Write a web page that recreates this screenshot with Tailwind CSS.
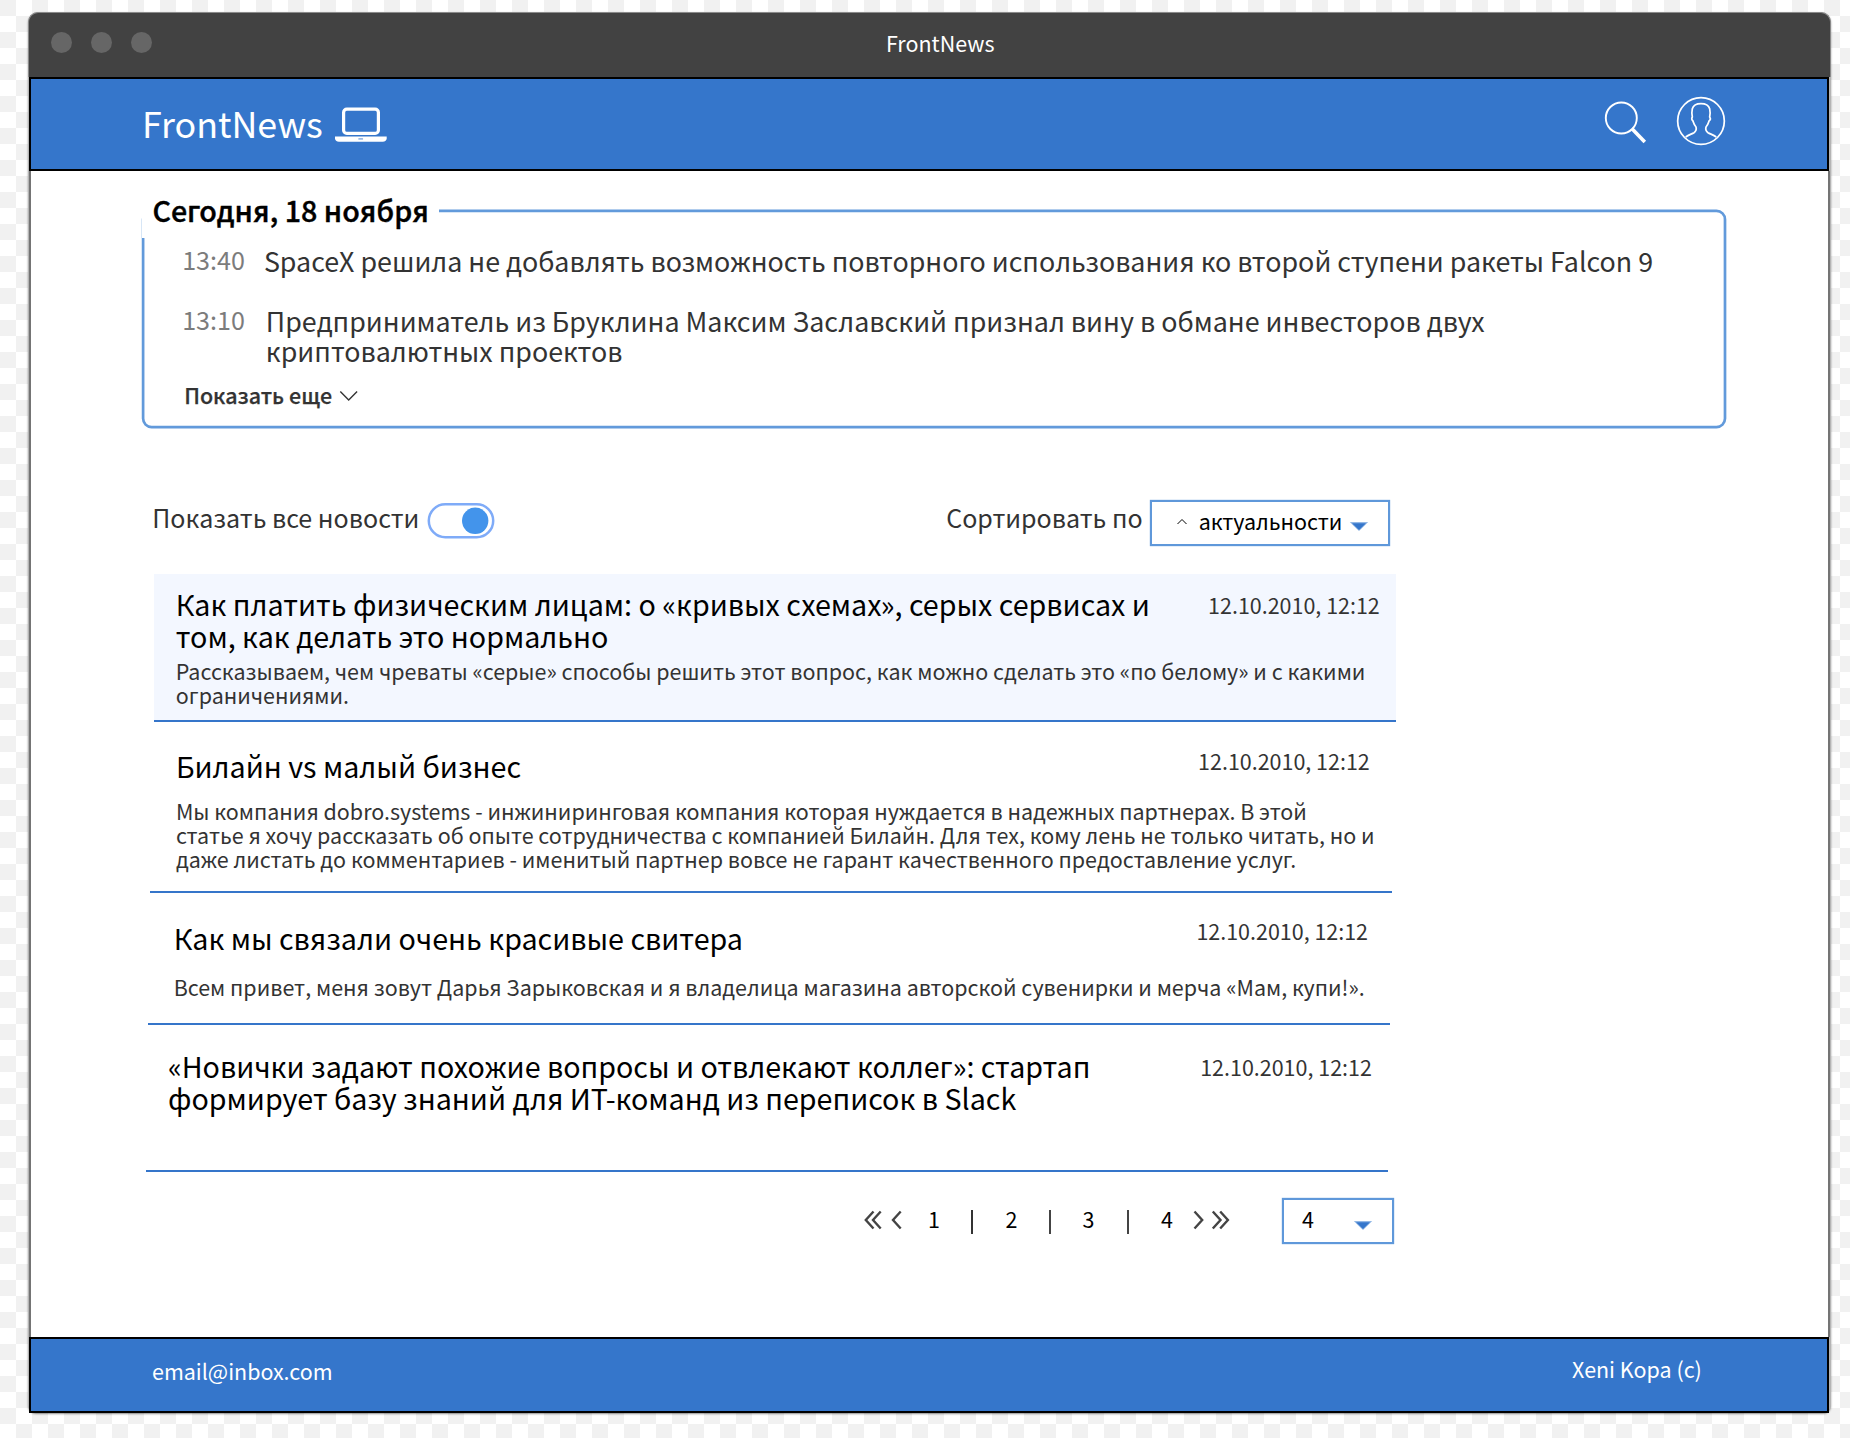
<!DOCTYPE html>
<html lang="ru">
<head>
<meta charset="utf-8">
<title>FrontNews</title>
<script src="https://cdn.jsdelivr.net/npm/@tailwindcss/browser@4"></script>
</head>
<body class="h-[1438px] overflow-hidden bg-white bg-[conic-gradient(#fff_25%,#f1f1f1_0_50%,#fff_0_75%,#f1f1f1_0)] bg-[length:32px_32px] pt-[12px] font-['Noto_Sans_CJK_SC',sans-serif] text-[21.47px] leading-[24px] text-[#333]">
<div class="ml-[28px] flex h-[1401px] w-[1803px] flex-col rounded-t-[10px] rounded-b-[8px] bg-[#b4b4b4] shadow-[0_1px_2px_rgba(0,0,0,0.45)]">

  <!-- Title bar -->
  <div class="flex h-[65px] items-start rounded-t-[10px] border-x border-t border-[#8a8a8a] bg-[#424242] pl-[21.6px]">
    <div class="mt-[18.500px] flex w-[835.400px] gap-[19px]">
      <span class="size-[21px] rounded-full bg-[#666]"></span>
      <span class="size-[21px] rounded-full bg-[#666]"></span>
      <span class="size-[21px] rounded-full bg-[#666]"></span>
    </div>
    <div class="mt-[18px] text-white">FrontNews</div>
  </div>

  <!-- Header -->
  <header class="ml-px flex h-[94px] w-[1800px] items-start border-2 border-black bg-[#3576cb] pl-[111px] text-white">
    <h1 class="mt-[23px] w-[193px] text-[35.8px] leading-[40px]">FrontNews</h1>
    <svg class="mt-[28px] h-[36px] w-[52px]" viewBox="0 0 52 36" fill="none">
      <rect x="8.6" y="2.2" width="34.8" height="24.2" rx="3.2" stroke="#fff" stroke-width="3.2"/>
      <path d="M0 29.6h51.7v1.6c0 2-1.6 3.6-4 3.6H4c-2.400 0-4-1.600-4-3.600z" fill="#fff"/>
      <rect x="23.300" y="31" width="4.800" height="1.800" rx=".6" fill="#9bbbe6"/>
    </svg>
    <svg class="mt-[22px] ml-[1216px] h-[44px] w-[44px]" viewBox="0 0 44 44" fill="none" stroke="#fff">
      <circle cx="18.300" cy="17" r="15.500" stroke-width="1.900"/>
      <path d="M28.800 27.500L41.800 41" stroke-width="3.600"/>
    </svg>
    <svg class="mt-[17px] ml-[29px] h-[50px] w-[50px]" viewBox="0 0 150 150" fill="none" stroke="#fff" stroke-width="5.200" stroke-linejoin="round">
      <circle cx="75" cy="75" r="70"/>
      <path d="M29 123C38 117 47 114 54 110C60 106 62 101 60 93C54 87 53 81 51 75C47 72 46 67 49 63C47 54 47 47 49 38C52 28 62 23 75 23C88 23 98 28 101 38C103 47 103 54 101 63C104 67 103 72 99 75C97 81 96 87 90 93C88 101 90 106 96 110C103 114 112 117 121 123"/>
    </svg>
  </header>

  <main class="ml-px h-[1166px] w-[1801px] border-x-2 border-[#747474] bg-white">

    <!-- Today -->
    <section class="relative ml-[110px] h-[258px] w-[1588px] pt-[23px]">
      <svg class="absolute top-[38px] left-0 h-[222px] w-[1588px]" viewBox="0 0 1588 222" fill="none">
        <rect x="2.100" y="1.900" width="1581.900" height="216.200" rx="8.500" stroke="#629adb" stroke-width="2.700"/>
      </svg>
      <div class="relative">
        <h2 class="ml-px h-[44px] w-[297px] bg-white pl-[10.400px] text-[28.65px] leading-[32px] font-medium text-black [-webkit-text-stroke:0.4px_#000]">Сегодня, 18 ноября</h2>
        <div class="mt-[7px] flex h-[60px] pl-[41.2px]">
          <time class="w-[81.7px] text-[25.1px] leading-[28px] text-[#7c7c7c]">13:40</time>
          <p class="mt-px text-[26.84px] leading-[30px] whitespace-nowrap">SpaceX решила не добавлять возможность повторного использования ко второй ступени ракеты Falcon 9</p>
        </div>
        <div class="flex h-[78px] pl-[41.2px]">
          <time class="w-[83.6px] text-[25.1px] leading-[28px] text-[#7c7c7c]">13:10</time>
          <p class="mt-px text-[26.85px] leading-[30px] whitespace-nowrap">Предприниматель из Бруклина Максим Заславский признал вину в обмане инвесторов двух<br>криптовалютных проектов</p>
        </div>
        <button class="ml-[43.2px] flex items-start font-medium">
          <span class="w-[154.500px] text-left [-webkit-text-stroke:0.25px_#333]">Показать еще</span>
          <svg class="mt-[7px] h-[12px] w-[20px]" viewBox="0 0 20 12" fill="none"><path d="M1.300 1.500L9.700 10L18.100 1.500" stroke="#333" stroke-width="1.400"/></svg>
        </button>
      </div>
    </section>

    <!-- Toolbar -->
    <div class="mt-[71px] flex h-[46px] items-start pl-[121.3px] text-[25.05px] leading-[28px] whitespace-nowrap">
      <span class="mt-[3px] w-[274.7px]">Показать все новости</span>
      <svg class="mt-[2px] h-[38px] w-[70px]" viewBox="0 0 70 38" fill="none">
        <rect x="1.800" y="2.200" width="64.400" height="33" rx="16.500" stroke="#7fabf8" stroke-width="2.500"/>
        <circle cx="48.200" cy="18.800" r="13.200" fill="#4394eb"/>
      </svg>
      <span class="mt-[3px] ml-[449.200px] w-[203.800px]">Сортировать по</span>
      <button class="flex h-[46px] w-[240px] items-start border-2 border-[#5f98da] text-[21.47px] leading-[24px] text-black shadow-[0_0_1px_#5f98da]">
        <svg class="mt-[16px] ml-[24px] h-[8px] w-[22px]" viewBox="0 0 22 8" fill="none"><path d="M1.500 6L6 1.500L10.500 6" stroke="#000" stroke-width="1"/></svg>
        <span class="mt-[7px] ml-[0.7px] w-[150.3px] text-left">актуальности</span>
        <svg class="mt-[18.500px] h-[11px] w-[20px]" viewBox="0 0 20 11"><path d="M.8 1H19.200L15.500 4.800L10 10L4.500 4.800Z" fill="#3b7dd0" fill-opacity=".55"/><path d="M3 2.200H17L10 9Z" fill="#3576cb"/></svg>
      </button>
    </div>

    <!-- News list -->
    <article class="mt-[28px] ml-[123px] h-[148px] w-[1242px] border-b-2 border-[#3575ca] bg-[#f3f7ff] pt-[14px] pl-[21.8px] whitespace-nowrap">
      <div class="flex">
        <h3 class="w-[1032.300px] text-[28.66px] leading-[32px] text-black">Как платить физическим лицам: о «кривых схемах», серых сервисах и<br>том, как делать это нормально</h3>
        <time class="mt-[5px]">12.10.2010, 12:12</time>
      </div>
      <p class="mt-[7px]">Рассказываем, чем чреваты «серые» способы решить этот вопрос, как можно сделать это «по белому» и с какими<br>ограничениями.</p>
    </article>
    <article class="ml-[119px] h-[171px] w-[1242px] border-b-2 border-[#3575ca] pt-[27px] pl-[25.9px] whitespace-nowrap">
      <div class="flex">
        <h3 class="mt-px w-[1022.200px] text-[28.66px] leading-[32px] text-black">Билайн vs малый бизнес</h3>
        <time>12.10.2010, 12:12</time>
      </div>
      <p class="mt-[17px]">Мы компания dobro.systems - инжиниринговая компания которая нуждается в надежных партнерах. В этой<br>статье я хочу рассказать об опыте сотрудничества с компанией Билайн. Для тех, кому лень не только читать, но и<br>даже листать до комментариев - именитый партнер вовсе не гарант качественного предоставление услуг.</p>
    </article>
    <article class="ml-[117px] h-[132px] w-[1242px] border-b-2 border-[#3575ca] pt-[26px] pl-[25.700px] whitespace-nowrap">
      <div class="flex">
        <h3 class="mt-[3px] w-[1022.700px] text-[28.66px] leading-[32px] text-black">Как мы связали очень красивые свитера</h3>
        <time>12.10.2010, 12:12</time>
      </div>
      <p class="mt-[21px]">Всем привет, меня зовут Дарья Зарыковская и я владелица магазина авторской сувенирки и мерча «Мам, купи!».</p>
    </article>
    <article class="ml-[115px] h-[147px] w-[1242px] border-b-2 border-[#3575ca] pt-[25px] pl-[22px] whitespace-nowrap">
      <div class="flex">
        <h3 class="w-[1032.200px] text-[28.65px] leading-[32px] text-black">«Новички задают похожие вопросы и отвлекают коллег»: стартап<br>формирует базу знаний для ИТ-команд из переписок в Slack</h3>
        <time class="mt-[5px]">12.10.2010, 12:12</time>
      </div>
    </article>

    <!-- Pagination -->
    <nav class="mt-[26px] flex h-[46px] items-start pl-[833px] text-black">
      <svg class="mt-[12px] h-[20px] w-[40px]" viewBox="0 0 40 20" fill="none" stroke="#444" stroke-width="2.400">
        <path d="M9.500 1.500L1.800 10L9.500 18.500M16.700 1.500L9 10L16.700 18.500M36.700 1.500L29 10L36.700 18.500"/>
      </svg>
      <div class="mt-[9px] ml-[24px] flex items-start">
        <span class="w-[43px]">1</span><i class="mt-[3px] h-[24px] w-[2px] bg-[#333]"></i>
        <span class="ml-[32.500px] w-[43.500px]">2</span><i class="mt-[3px] h-[24px] w-[2px] bg-[#444]"></i>
        <span class="ml-[31.500px] w-[44.500px]">3</span><i class="mt-[3px] h-[24px] w-[2px] bg-[#444]"></i>
        <span class="ml-[32px] w-[31px]">4</span>
      </div>
      <svg class="mt-[12px] h-[20px] w-[40px]" viewBox="0 0 40 20" fill="none" stroke="#444" stroke-width="2.400">
        <path d="M2.500 1.500L10.200 10L2.500 18.500M20.800 1.500L28.500 10L20.800 18.500M28.200 1.500L35.900 10L28.200 18.500"/>
      </svg>
      <button class="ml-[50px] flex h-[46px] w-[112px] items-start border-2 border-[#5f98da] shadow-[0_0_1px_#5f98da]">
        <span class="mt-[7px] ml-[17.900px] w-[51.100px] text-left">4</span>
        <svg class="mt-[19.500px] h-[11px] w-[20px]" viewBox="0 0 20 11"><path d="M.8 1H19.200L15.500 4.800L10 10L4.500 4.800Z" fill="#3b7dd0" fill-opacity=".55"/><path d="M3 2.200H17L10 9Z" fill="#3576cb"/></svg>
      </button>
    </nav>
  </main>

  <!-- Footer -->
  <footer class="ml-px flex h-[76px] w-[1800px] items-start border-2 border-black bg-[#3576cb] pl-[121px] text-white">
    <span class="mt-[20px] w-[1420px]">email@inbox.com</span>
    <span class="mt-[18px]">Xeni Kopa (c)</span>
  </footer>
</div>
</body>
</html>
